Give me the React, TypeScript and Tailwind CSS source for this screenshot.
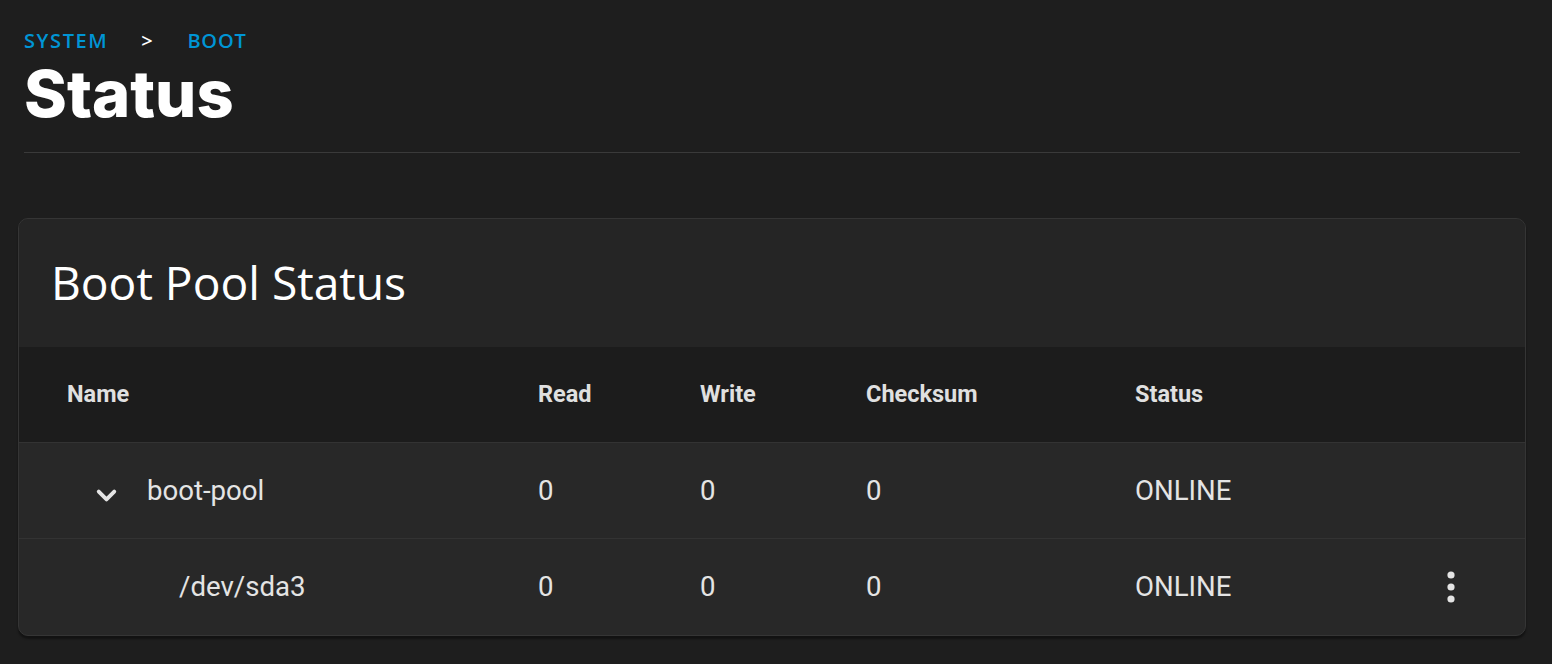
import { ChevronDown } from "lucide-react";

interface PoolRow {
  name: string;
  read: number;
  write: number;
  checksum: number;
  status: string;
  depth: number;
  expandable?: boolean;
  actions?: boolean;
}

const rows: PoolRow[] = [
  { name: "boot-pool", read: 0, write: 0, checksum: 0, status: "ONLINE", depth: 0, expandable: true },
  { name: "/dev/sda3", read: 0, write: 0, checksum: 0, status: "ONLINE", depth: 1, actions: true },
];

const gridCols = "grid grid-cols-[471px_162px_166px_269px_1fr_148px] items-center pl-12";

function Kebab() {
  return (
    <svg width="10" height="34" viewBox="0 0 10 34" className="text-[#e4e4e4]">
      <circle cx="5" cy="5" r="3.6" fill="currentColor" />
      <circle cx="5" cy="17" r="3.6" fill="currentColor" />
      <circle cx="5" cy="29" r="3.6" fill="currentColor" />
    </svg>
  );
}

export default function App() {
  return (
    <div className="min-h-[664px] w-full bg-[#1e1e1e] pl-[18px] pr-[26px] pt-[28px] pb-[28px]">
      {/* Page header */}
      <div className="px-[6px]">
        <div className="flex items-center font-['Open_Sans',sans-serif] text-[20px] font-semibold tracking-[0.08em] leading-[26px]">
          <span className="text-[#0095d5]">SYSTEM</span>
          <span className="ml-[33px] text-white">&gt;</span>
          <span className="ml-[33px] tracking-[0.04em] text-[#0095d5]">BOOT</span>
        </div>
        <h1 className="mt-[4px] font-['Inter',sans-serif] text-[65px] font-extrabold leading-[72px] tracking-normal text-white">
          Status
        </h1>
        <div className="mt-[22px] h-px bg-[#3a3a3a]" />
      </div>

      {/* Boot Pool Status card */}
      <div className="mt-[65px] overflow-hidden rounded-[10px] border border-[#353535] bg-[#282828] shadow-[0_3px_2px_rgba(0,0,0,0.4)]">
        <div className="flex h-[128px] items-center bg-[#252525] pl-[32px]">
          <h2 className="font-['Open_Sans',sans-serif] text-[46.2px] font-normal leading-none text-white">
            Boot Pool Status
          </h2>
        </div>

        <div className="font-['Roboto',sans-serif]">
          <div className={`${gridCols} h-[96px] border-b border-[#333333] bg-[#1c1c1c] text-[23.5px] font-bold text-[#e0e0e0]`}>
            <div>Name</div>
            <div>Read</div>
            <div>Write</div>
            <div>Checksum</div>
            <div>Status</div>
            <div />
          </div>

          {rows.map((row, i) => (
            <div
              key={row.name}
              className={`${gridCols} h-[96px] text-[27.6px] text-[#e4e4e4] ${i < rows.length - 1 ? "border-b border-[#333333]" : ""}`}
            >
              <div className="flex items-center">
                {row.expandable ? (
                  <>
                    <ChevronDown className="ml-[24px] mt-[10px] text-[#e4e4e4]" size={31} strokeWidth={3} />
                    <span className="ml-[25px]">{row.name}</span>
                  </>
                ) : (
                  <span className="ml-[112px]">{row.name}</span>
                )}
              </div>
              <div>{row.read}</div>
              <div>{row.write}</div>
              <div>{row.checksum}</div>
              <div>{row.status}</div>
              <div className="flex justify-center">{row.actions ? <Kebab /> : null}</div>
            </div>
          ))}
        </div>
      </div>
    </div>
  );
}
